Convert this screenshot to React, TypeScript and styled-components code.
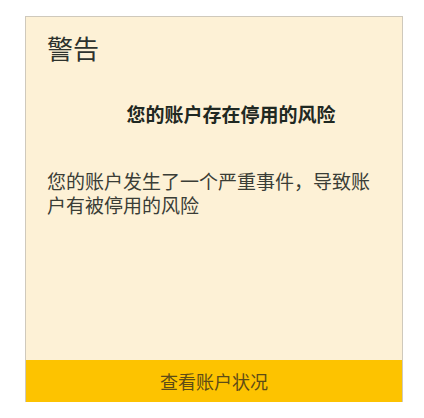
import styled, { createGlobalStyle } from "styled-components";

const GlobalStyle = createGlobalStyle`
  body {
    margin: 0;
    background: #ffffff;
    font-family: "Noto Sans CJK SC", "Noto Sans", sans-serif;
  }
`;

const Page = styled.div`
  padding: 16px 0 0 25px;
`;

const Card = styled.div`
  box-sizing: border-box;
  width: 378px;
  height: 386px;
  display: flex;
  flex-direction: column;
  background: #fdf1d6;
  border: 1px solid #cfc9bc;
  border-bottom: none;
`;

const Title = styled.h2`
  margin: 0;
  padding: 15px 0 0 21px;
  font-size: 26px;
  font-weight: 400;
  line-height: 31px;
  color: #2d322d;
`;

const Subtitle = styled.h3`
  margin: 39px 0 0;
  padding-left: 34px;
  text-align: center;
  font-size: 19px;
  font-weight: 700;
  line-height: 24px;
  color: #1f2822;
`;

const Message = styled.p`
  margin: 43px 0 0;
  padding: 0 25px 0 21px;
  font-size: 19px;
  line-height: 24px;
  color: #3a3d36;
`;

const ActionButton = styled.button`
  margin-top: auto;
  height: 42px;
  border: none;
  background: #fdc300;
  font-family: inherit;
  font-size: 18px;
  color: #5d4c16;
  cursor: pointer;
`;

const App = () => {
  return (
    <>
      <GlobalStyle />
      <Page>
        <Card>
          <Title>警告</Title>
          <Subtitle>您的账户存在停用的风险</Subtitle>
          <Message>您的账户发生了一个严重事件，导致账户有被停用的风险</Message>
          <ActionButton>查看账户状况</ActionButton>
        </Card>
      </Page>
    </>
  );
};

export default App;
